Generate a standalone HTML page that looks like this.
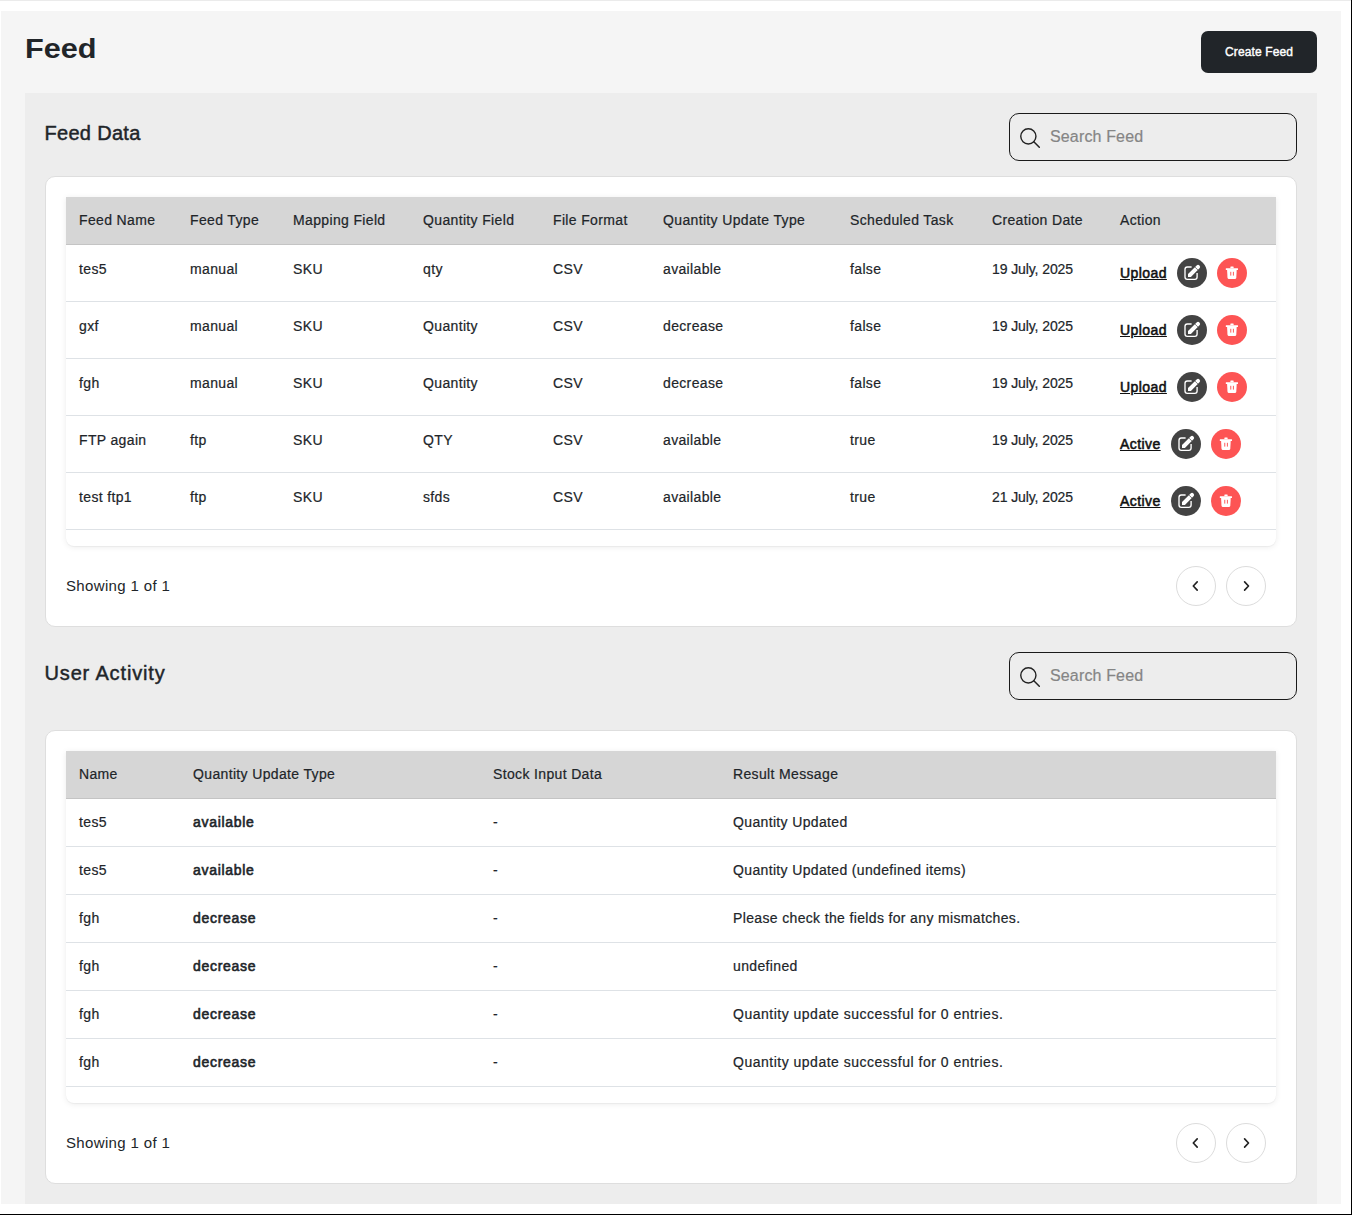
<!DOCTYPE html>
<html><head><meta charset="utf-8"><title>Feed</title>
<style>
html,body{margin:0;padding:0;}
body{width:1352px;height:1215px;position:relative;overflow:hidden;background:#fff;font-family:"Liberation Sans", sans-serif;}
.t{position:absolute;white-space:nowrap;}
.r{-webkit-text-stroke:0.2px #212529;}
</style></head><body>
<div style="position:absolute;left:0;top:0;width:1351px;height:1px;background:#ebebeb"></div>
<div style="position:absolute;left:1351px;top:0;width:1px;height:1215px;background:#000"></div>
<div style="position:absolute;left:0;top:1214px;width:1352px;height:1px;background:#000"></div>
<div style="position:absolute;left:1px;top:11px;width:1340px;height:1193px;background:#f5f5f5"></div>
<div style="position:absolute;left:25px;top:93px;width:1292px;height:1111px;background:#ededed"></div>
<div class="t" style="left:25px;top:34.70px;font-size:28px;line-height:28px;font-weight:700;color:#212529;letter-spacing:0px;transform:scaleX(1.095);transform-origin:0 0">Feed</div>
<div style="position:absolute;left:1201px;top:31px;width:116px;height:42px;background:#212529;border-radius:7px"></div>
<div class="t" style="left:1225px;top:46.44px;font-size:12px;line-height:12px;font-weight:400;color:#fff;letter-spacing:0.12px;-webkit-text-stroke:0.4px #fff">Create Feed</div>
<div class="t" style="left:44.5px;top:123.07px;font-size:20px;line-height:20px;font-weight:400;color:#212529;letter-spacing:0.3px;-webkit-text-stroke:0.45px #212529">Feed Data</div>
<div style="position:absolute;left:1009px;top:113px;width:286px;height:46px;border:1px solid #1a1a1a;border-radius:10px"><svg width="22" height="22" viewBox="0 0 22 22" style="position:absolute;left:10px;top:14px;overflow:visible"><circle cx="8.35" cy="8.35" r="7.6" fill="none" stroke="#222" stroke-width="1.4"/><line x1="13.8" y1="13.8" x2="19.3" y2="19.2" stroke="#222" stroke-width="1.5" stroke-linecap="round"/></svg></div><div class="t" style="left:1050px;top:128.86px;font-size:16px;line-height:16px;font-weight:400;color:#858585;letter-spacing:0.15px;-webkit-text-stroke:0.2px #858585">Search Feed</div>
<div style="position:absolute;left:45px;top:176px;width:1250px;height:449px;background:#fff;border:1px solid #dedede;border-radius:10px"></div>
<div style="position:absolute;left:66px;top:197px;width:1210px;height:349px;background:#fff;border-radius:0 0 8px 8px;box-shadow:0 1px 1px rgba(0,0,0,0.04),0 1px 6px rgba(0,0,0,0.08)"></div>
<div style="position:absolute;left:66px;top:197px;width:1210px;height:47px;background:#d6d6d6;border-bottom:1px solid #c4c4c4"></div>
<div class="t r" style="left:79px;top:213.15px;font-size:14px;line-height:14px;font-weight:400;color:#212529;letter-spacing:0.35px;">Feed Name</div>
<div class="t r" style="left:190px;top:213.15px;font-size:14px;line-height:14px;font-weight:400;color:#212529;letter-spacing:0.35px;">Feed Type</div>
<div class="t r" style="left:293px;top:213.15px;font-size:14px;line-height:14px;font-weight:400;color:#212529;letter-spacing:0.35px;">Mapping Field</div>
<div class="t r" style="left:423px;top:213.15px;font-size:14px;line-height:14px;font-weight:400;color:#212529;letter-spacing:0.35px;">Quantity Field</div>
<div class="t r" style="left:553px;top:213.15px;font-size:14px;line-height:14px;font-weight:400;color:#212529;letter-spacing:0.35px;">File Format</div>
<div class="t r" style="left:663px;top:213.15px;font-size:14px;line-height:14px;font-weight:400;color:#212529;letter-spacing:0.35px;">Quantity Update Type</div>
<div class="t r" style="left:850px;top:213.15px;font-size:14px;line-height:14px;font-weight:400;color:#212529;letter-spacing:0.35px;">Scheduled Task</div>
<div class="t r" style="left:992px;top:213.15px;font-size:14px;line-height:14px;font-weight:400;color:#212529;letter-spacing:0.35px;">Creation Date</div>
<div class="t r" style="left:1120px;top:213.15px;font-size:14px;line-height:14px;font-weight:400;color:#212529;letter-spacing:0.35px;">Action</div>
<div class="t r" style="left:79px;top:261.65px;font-size:14px;line-height:14px;font-weight:400;color:#212529;letter-spacing:0.35px;">tes5</div>
<div class="t r" style="left:190px;top:261.65px;font-size:14px;line-height:14px;font-weight:400;color:#212529;letter-spacing:0.35px;">manual</div>
<div class="t r" style="left:293px;top:261.65px;font-size:14px;line-height:14px;font-weight:400;color:#212529;letter-spacing:0.35px;">SKU</div>
<div class="t r" style="left:423px;top:261.65px;font-size:14px;line-height:14px;font-weight:400;color:#212529;letter-spacing:0.35px;">qty</div>
<div class="t r" style="left:553px;top:261.65px;font-size:14px;line-height:14px;font-weight:400;color:#212529;letter-spacing:0.35px;">CSV</div>
<div class="t r" style="left:663px;top:261.65px;font-size:14px;line-height:14px;font-weight:400;color:#212529;letter-spacing:0.35px;">available</div>
<div class="t r" style="left:850px;top:261.65px;font-size:14px;line-height:14px;font-weight:400;color:#212529;letter-spacing:0.35px;">false</div>
<div class="t r" style="left:992px;top:261.65px;font-size:14px;line-height:14px;font-weight:400;color:#212529;letter-spacing:-0.1px;">19 July, 2025</div>
<div class="t" style="left:1120px;top:266.25px;font-size:14px;line-height:14px;font-weight:400;color:#111;letter-spacing:0.42px;text-decoration:underline;text-underline-offset:0.7px;-webkit-text-stroke:0.55px #111">Upload</div>
<div style="position:absolute;left:1177px;top:258px;width:30px;height:30px"><svg width="30" height="30" viewBox="0 0 30 30"><circle cx="15" cy="15" r="15" fill="#434343"/><path d="M14.6 9 H10.3 Q8 9 8 11.3 V19.1 Q8 21.4 10.3 21.4 H17.8 Q20.1 21.4 20.1 19.1 V15" fill="none" stroke="#fff" stroke-width="1.35"/><path d="M11 18.9 L11 16.1 L19.6 7.5 A1.98 1.98 0 0 1 22.5 10.3 L13.9 18.9 Z" fill="#fff"/><line x1="18.0" y1="9.1" x2="20.9" y2="12.0" stroke="#434343" stroke-width="0.7"/></svg></div><div style="position:absolute;left:1217px;top:258px;width:30px;height:30px"><svg width="30" height="30" viewBox="0 0 30 30"><circle cx="15" cy="15" r="15" fill="#fd5454"/><path d="M13.2 10.3 L13.6 8.5 H16.4 L16.8 10.3 Z" fill="#fff"/><rect x="8.8" y="10.2" width="12.2" height="1.9" rx="0.4" fill="#fff"/><path d="M10.1 12 H19.7 L19.3 19.8 Q19.2 20.9 18.2 20.9 H11.6 Q10.6 20.9 10.5 19.8 Z" fill="#fff"/><rect x="13.3" y="13.8" width="0.95" height="3.8" fill="#fd5454"/><rect x="15.9" y="13.8" width="0.95" height="3.8" fill="#fd5454"/></svg></div>
<div style="position:absolute;left:66px;top:301px;width:1210px;height:1px;background:#dee2e6"></div>
<div class="t r" style="left:79px;top:318.65px;font-size:14px;line-height:14px;font-weight:400;color:#212529;letter-spacing:0.35px;">gxf</div>
<div class="t r" style="left:190px;top:318.65px;font-size:14px;line-height:14px;font-weight:400;color:#212529;letter-spacing:0.35px;">manual</div>
<div class="t r" style="left:293px;top:318.65px;font-size:14px;line-height:14px;font-weight:400;color:#212529;letter-spacing:0.35px;">SKU</div>
<div class="t r" style="left:423px;top:318.65px;font-size:14px;line-height:14px;font-weight:400;color:#212529;letter-spacing:0.35px;">Quantity</div>
<div class="t r" style="left:553px;top:318.65px;font-size:14px;line-height:14px;font-weight:400;color:#212529;letter-spacing:0.35px;">CSV</div>
<div class="t r" style="left:663px;top:318.65px;font-size:14px;line-height:14px;font-weight:400;color:#212529;letter-spacing:0.35px;">decrease</div>
<div class="t r" style="left:850px;top:318.65px;font-size:14px;line-height:14px;font-weight:400;color:#212529;letter-spacing:0.35px;">false</div>
<div class="t r" style="left:992px;top:318.65px;font-size:14px;line-height:14px;font-weight:400;color:#212529;letter-spacing:-0.1px;">19 July, 2025</div>
<div class="t" style="left:1120px;top:323.25px;font-size:14px;line-height:14px;font-weight:400;color:#111;letter-spacing:0.42px;text-decoration:underline;text-underline-offset:0.7px;-webkit-text-stroke:0.55px #111">Upload</div>
<div style="position:absolute;left:1177px;top:315px;width:30px;height:30px"><svg width="30" height="30" viewBox="0 0 30 30"><circle cx="15" cy="15" r="15" fill="#434343"/><path d="M14.6 9 H10.3 Q8 9 8 11.3 V19.1 Q8 21.4 10.3 21.4 H17.8 Q20.1 21.4 20.1 19.1 V15" fill="none" stroke="#fff" stroke-width="1.35"/><path d="M11 18.9 L11 16.1 L19.6 7.5 A1.98 1.98 0 0 1 22.5 10.3 L13.9 18.9 Z" fill="#fff"/><line x1="18.0" y1="9.1" x2="20.9" y2="12.0" stroke="#434343" stroke-width="0.7"/></svg></div><div style="position:absolute;left:1217px;top:315px;width:30px;height:30px"><svg width="30" height="30" viewBox="0 0 30 30"><circle cx="15" cy="15" r="15" fill="#fd5454"/><path d="M13.2 10.3 L13.6 8.5 H16.4 L16.8 10.3 Z" fill="#fff"/><rect x="8.8" y="10.2" width="12.2" height="1.9" rx="0.4" fill="#fff"/><path d="M10.1 12 H19.7 L19.3 19.8 Q19.2 20.9 18.2 20.9 H11.6 Q10.6 20.9 10.5 19.8 Z" fill="#fff"/><rect x="13.3" y="13.8" width="0.95" height="3.8" fill="#fd5454"/><rect x="15.9" y="13.8" width="0.95" height="3.8" fill="#fd5454"/></svg></div>
<div style="position:absolute;left:66px;top:358px;width:1210px;height:1px;background:#dee2e6"></div>
<div class="t r" style="left:79px;top:375.65px;font-size:14px;line-height:14px;font-weight:400;color:#212529;letter-spacing:0.35px;">fgh</div>
<div class="t r" style="left:190px;top:375.65px;font-size:14px;line-height:14px;font-weight:400;color:#212529;letter-spacing:0.35px;">manual</div>
<div class="t r" style="left:293px;top:375.65px;font-size:14px;line-height:14px;font-weight:400;color:#212529;letter-spacing:0.35px;">SKU</div>
<div class="t r" style="left:423px;top:375.65px;font-size:14px;line-height:14px;font-weight:400;color:#212529;letter-spacing:0.35px;">Quantity</div>
<div class="t r" style="left:553px;top:375.65px;font-size:14px;line-height:14px;font-weight:400;color:#212529;letter-spacing:0.35px;">CSV</div>
<div class="t r" style="left:663px;top:375.65px;font-size:14px;line-height:14px;font-weight:400;color:#212529;letter-spacing:0.35px;">decrease</div>
<div class="t r" style="left:850px;top:375.65px;font-size:14px;line-height:14px;font-weight:400;color:#212529;letter-spacing:0.35px;">false</div>
<div class="t r" style="left:992px;top:375.65px;font-size:14px;line-height:14px;font-weight:400;color:#212529;letter-spacing:-0.1px;">19 July, 2025</div>
<div class="t" style="left:1120px;top:380.25px;font-size:14px;line-height:14px;font-weight:400;color:#111;letter-spacing:0.42px;text-decoration:underline;text-underline-offset:0.7px;-webkit-text-stroke:0.55px #111">Upload</div>
<div style="position:absolute;left:1177px;top:372px;width:30px;height:30px"><svg width="30" height="30" viewBox="0 0 30 30"><circle cx="15" cy="15" r="15" fill="#434343"/><path d="M14.6 9 H10.3 Q8 9 8 11.3 V19.1 Q8 21.4 10.3 21.4 H17.8 Q20.1 21.4 20.1 19.1 V15" fill="none" stroke="#fff" stroke-width="1.35"/><path d="M11 18.9 L11 16.1 L19.6 7.5 A1.98 1.98 0 0 1 22.5 10.3 L13.9 18.9 Z" fill="#fff"/><line x1="18.0" y1="9.1" x2="20.9" y2="12.0" stroke="#434343" stroke-width="0.7"/></svg></div><div style="position:absolute;left:1217px;top:372px;width:30px;height:30px"><svg width="30" height="30" viewBox="0 0 30 30"><circle cx="15" cy="15" r="15" fill="#fd5454"/><path d="M13.2 10.3 L13.6 8.5 H16.4 L16.8 10.3 Z" fill="#fff"/><rect x="8.8" y="10.2" width="12.2" height="1.9" rx="0.4" fill="#fff"/><path d="M10.1 12 H19.7 L19.3 19.8 Q19.2 20.9 18.2 20.9 H11.6 Q10.6 20.9 10.5 19.8 Z" fill="#fff"/><rect x="13.3" y="13.8" width="0.95" height="3.8" fill="#fd5454"/><rect x="15.9" y="13.8" width="0.95" height="3.8" fill="#fd5454"/></svg></div>
<div style="position:absolute;left:66px;top:415px;width:1210px;height:1px;background:#dee2e6"></div>
<div class="t r" style="left:79px;top:432.65px;font-size:14px;line-height:14px;font-weight:400;color:#212529;letter-spacing:0.35px;">FTP again</div>
<div class="t r" style="left:190px;top:432.65px;font-size:14px;line-height:14px;font-weight:400;color:#212529;letter-spacing:0.35px;">ftp</div>
<div class="t r" style="left:293px;top:432.65px;font-size:14px;line-height:14px;font-weight:400;color:#212529;letter-spacing:0.35px;">SKU</div>
<div class="t r" style="left:423px;top:432.65px;font-size:14px;line-height:14px;font-weight:400;color:#212529;letter-spacing:0.35px;">QTY</div>
<div class="t r" style="left:553px;top:432.65px;font-size:14px;line-height:14px;font-weight:400;color:#212529;letter-spacing:0.35px;">CSV</div>
<div class="t r" style="left:663px;top:432.65px;font-size:14px;line-height:14px;font-weight:400;color:#212529;letter-spacing:0.35px;">available</div>
<div class="t r" style="left:850px;top:432.65px;font-size:14px;line-height:14px;font-weight:400;color:#212529;letter-spacing:0.35px;">true</div>
<div class="t r" style="left:992px;top:432.65px;font-size:14px;line-height:14px;font-weight:400;color:#212529;letter-spacing:-0.1px;">19 July, 2025</div>
<div class="t" style="left:1120px;top:437.25px;font-size:14px;line-height:14px;font-weight:400;color:#111;letter-spacing:0.42px;text-decoration:underline;text-underline-offset:0.7px;-webkit-text-stroke:0.55px #111">Active</div>
<div style="position:absolute;left:1171px;top:429px;width:30px;height:30px"><svg width="30" height="30" viewBox="0 0 30 30"><circle cx="15" cy="15" r="15" fill="#434343"/><path d="M14.6 9 H10.3 Q8 9 8 11.3 V19.1 Q8 21.4 10.3 21.4 H17.8 Q20.1 21.4 20.1 19.1 V15" fill="none" stroke="#fff" stroke-width="1.35"/><path d="M11 18.9 L11 16.1 L19.6 7.5 A1.98 1.98 0 0 1 22.5 10.3 L13.9 18.9 Z" fill="#fff"/><line x1="18.0" y1="9.1" x2="20.9" y2="12.0" stroke="#434343" stroke-width="0.7"/></svg></div><div style="position:absolute;left:1211px;top:429px;width:30px;height:30px"><svg width="30" height="30" viewBox="0 0 30 30"><circle cx="15" cy="15" r="15" fill="#fd5454"/><path d="M13.2 10.3 L13.6 8.5 H16.4 L16.8 10.3 Z" fill="#fff"/><rect x="8.8" y="10.2" width="12.2" height="1.9" rx="0.4" fill="#fff"/><path d="M10.1 12 H19.7 L19.3 19.8 Q19.2 20.9 18.2 20.9 H11.6 Q10.6 20.9 10.5 19.8 Z" fill="#fff"/><rect x="13.3" y="13.8" width="0.95" height="3.8" fill="#fd5454"/><rect x="15.9" y="13.8" width="0.95" height="3.8" fill="#fd5454"/></svg></div>
<div style="position:absolute;left:66px;top:472px;width:1210px;height:1px;background:#dee2e6"></div>
<div class="t r" style="left:79px;top:489.65px;font-size:14px;line-height:14px;font-weight:400;color:#212529;letter-spacing:0.35px;">test ftp1</div>
<div class="t r" style="left:190px;top:489.65px;font-size:14px;line-height:14px;font-weight:400;color:#212529;letter-spacing:0.35px;">ftp</div>
<div class="t r" style="left:293px;top:489.65px;font-size:14px;line-height:14px;font-weight:400;color:#212529;letter-spacing:0.35px;">SKU</div>
<div class="t r" style="left:423px;top:489.65px;font-size:14px;line-height:14px;font-weight:400;color:#212529;letter-spacing:0.35px;">sfds</div>
<div class="t r" style="left:553px;top:489.65px;font-size:14px;line-height:14px;font-weight:400;color:#212529;letter-spacing:0.35px;">CSV</div>
<div class="t r" style="left:663px;top:489.65px;font-size:14px;line-height:14px;font-weight:400;color:#212529;letter-spacing:0.35px;">available</div>
<div class="t r" style="left:850px;top:489.65px;font-size:14px;line-height:14px;font-weight:400;color:#212529;letter-spacing:0.35px;">true</div>
<div class="t r" style="left:992px;top:489.65px;font-size:14px;line-height:14px;font-weight:400;color:#212529;letter-spacing:-0.1px;">21 July, 2025</div>
<div class="t" style="left:1120px;top:494.25px;font-size:14px;line-height:14px;font-weight:400;color:#111;letter-spacing:0.42px;text-decoration:underline;text-underline-offset:0.7px;-webkit-text-stroke:0.55px #111">Active</div>
<div style="position:absolute;left:1171px;top:486px;width:30px;height:30px"><svg width="30" height="30" viewBox="0 0 30 30"><circle cx="15" cy="15" r="15" fill="#434343"/><path d="M14.6 9 H10.3 Q8 9 8 11.3 V19.1 Q8 21.4 10.3 21.4 H17.8 Q20.1 21.4 20.1 19.1 V15" fill="none" stroke="#fff" stroke-width="1.35"/><path d="M11 18.9 L11 16.1 L19.6 7.5 A1.98 1.98 0 0 1 22.5 10.3 L13.9 18.9 Z" fill="#fff"/><line x1="18.0" y1="9.1" x2="20.9" y2="12.0" stroke="#434343" stroke-width="0.7"/></svg></div><div style="position:absolute;left:1211px;top:486px;width:30px;height:30px"><svg width="30" height="30" viewBox="0 0 30 30"><circle cx="15" cy="15" r="15" fill="#fd5454"/><path d="M13.2 10.3 L13.6 8.5 H16.4 L16.8 10.3 Z" fill="#fff"/><rect x="8.8" y="10.2" width="12.2" height="1.9" rx="0.4" fill="#fff"/><path d="M10.1 12 H19.7 L19.3 19.8 Q19.2 20.9 18.2 20.9 H11.6 Q10.6 20.9 10.5 19.8 Z" fill="#fff"/><rect x="13.3" y="13.8" width="0.95" height="3.8" fill="#fd5454"/><rect x="15.9" y="13.8" width="0.95" height="3.8" fill="#fd5454"/></svg></div>
<div style="position:absolute;left:66px;top:529px;width:1210px;height:1px;background:#dee2e6"></div>
<div class="t" style="left:66px;top:578.30px;font-size:15px;line-height:15px;font-weight:400;color:#212529;letter-spacing:0.35px;">Showing 1 of 1</div>
<div style="position:absolute;left:1176px;top:566px;width:40px;height:40px;box-sizing:border-box;border:1px solid #dcdcdc;border-radius:50%;overflow:hidden"><div style="position:absolute;left:-1px;top:-1px"><svg width="40" height="40" viewBox="0 0 40 40"><polyline points="21.2,15.9 17.3,20 21.2,24.1" fill="none" stroke="#222" stroke-width="1.65" stroke-linecap="round" stroke-linejoin="round"/></svg></div></div><div style="position:absolute;left:1226px;top:566px;width:40px;height:40px;box-sizing:border-box;border:1px solid #dcdcdc;border-radius:50%;overflow:hidden"><div style="position:absolute;left:-1px;top:-1px"><svg width="40" height="40" viewBox="0 0 40 40"><polyline points="18.6,15.9 22.5,20 18.6,24.1" fill="none" stroke="#222" stroke-width="1.65" stroke-linecap="round" stroke-linejoin="round"/></svg></div></div>
<div class="t" style="left:44.5px;top:662.77px;font-size:20px;line-height:20px;font-weight:400;color:#212529;letter-spacing:0.85px;-webkit-text-stroke:0.45px #212529">User Activity</div>
<div style="position:absolute;left:1009px;top:652px;width:286px;height:46px;border:1px solid #1a1a1a;border-radius:10px"><svg width="22" height="22" viewBox="0 0 22 22" style="position:absolute;left:10px;top:14px;overflow:visible"><circle cx="8.35" cy="8.35" r="7.6" fill="none" stroke="#222" stroke-width="1.4"/><line x1="13.8" y1="13.8" x2="19.3" y2="19.2" stroke="#222" stroke-width="1.5" stroke-linecap="round"/></svg></div><div class="t" style="left:1050px;top:667.86px;font-size:16px;line-height:16px;font-weight:400;color:#858585;letter-spacing:0.15px;-webkit-text-stroke:0.2px #858585">Search Feed</div>
<div style="position:absolute;left:45px;top:730px;width:1250px;height:452px;background:#fff;border:1px solid #dedede;border-radius:10px"></div>
<div style="position:absolute;left:66px;top:751px;width:1210px;height:352px;background:#fff;border-radius:0 0 8px 8px;box-shadow:0 1px 1px rgba(0,0,0,0.04),0 1px 6px rgba(0,0,0,0.08)"></div>
<div style="position:absolute;left:66px;top:751px;width:1210px;height:47px;background:#d6d6d6;border-bottom:1px solid #c4c4c4"></div>
<div class="t r" style="left:79px;top:767.15px;font-size:14px;line-height:14px;font-weight:400;color:#212529;letter-spacing:0.35px;">Name</div>
<div class="t r" style="left:193px;top:767.15px;font-size:14px;line-height:14px;font-weight:400;color:#212529;letter-spacing:0.35px;">Quantity Update Type</div>
<div class="t r" style="left:493px;top:767.15px;font-size:14px;line-height:14px;font-weight:400;color:#212529;letter-spacing:0.35px;">Stock Input Data</div>
<div class="t r" style="left:733px;top:767.15px;font-size:14px;line-height:14px;font-weight:400;color:#212529;letter-spacing:0.35px;">Result Message</div>
<div class="t r" style="left:79px;top:815.15px;font-size:14px;line-height:14px;font-weight:400;color:#212529;letter-spacing:0.35px;">tes5</div>
<div class="t r" style="left:193px;top:815.15px;font-size:14px;line-height:14px;font-weight:400;color:#212529;letter-spacing:0.7px;-webkit-text-stroke:0.6px #212529">available</div>
<div class="t r" style="left:493px;top:815.15px;font-size:14px;line-height:14px;font-weight:400;color:#212529;letter-spacing:0.35px;">-</div>
<div class="t r" style="left:733px;top:815.15px;font-size:14px;line-height:14px;font-weight:400;color:#212529;letter-spacing:0.35px;">Quantity Updated</div>
<div style="position:absolute;left:66px;top:846px;width:1210px;height:1px;background:#dee2e6"></div>
<div class="t r" style="left:79px;top:863.15px;font-size:14px;line-height:14px;font-weight:400;color:#212529;letter-spacing:0.35px;">tes5</div>
<div class="t r" style="left:193px;top:863.15px;font-size:14px;line-height:14px;font-weight:400;color:#212529;letter-spacing:0.7px;-webkit-text-stroke:0.6px #212529">available</div>
<div class="t r" style="left:493px;top:863.15px;font-size:14px;line-height:14px;font-weight:400;color:#212529;letter-spacing:0.35px;">-</div>
<div class="t r" style="left:733px;top:863.15px;font-size:14px;line-height:14px;font-weight:400;color:#212529;letter-spacing:0.35px;">Quantity Updated (undefined items)</div>
<div style="position:absolute;left:66px;top:894px;width:1210px;height:1px;background:#dee2e6"></div>
<div class="t r" style="left:79px;top:911.15px;font-size:14px;line-height:14px;font-weight:400;color:#212529;letter-spacing:0.35px;">fgh</div>
<div class="t r" style="left:193px;top:911.15px;font-size:14px;line-height:14px;font-weight:400;color:#212529;letter-spacing:0.7px;-webkit-text-stroke:0.6px #212529">decrease</div>
<div class="t r" style="left:493px;top:911.15px;font-size:14px;line-height:14px;font-weight:400;color:#212529;letter-spacing:0.35px;">-</div>
<div class="t r" style="left:733px;top:911.15px;font-size:14px;line-height:14px;font-weight:400;color:#212529;letter-spacing:0.35px;">Please check the fields for any mismatches.</div>
<div style="position:absolute;left:66px;top:942px;width:1210px;height:1px;background:#dee2e6"></div>
<div class="t r" style="left:79px;top:959.15px;font-size:14px;line-height:14px;font-weight:400;color:#212529;letter-spacing:0.35px;">fgh</div>
<div class="t r" style="left:193px;top:959.15px;font-size:14px;line-height:14px;font-weight:400;color:#212529;letter-spacing:0.7px;-webkit-text-stroke:0.6px #212529">decrease</div>
<div class="t r" style="left:493px;top:959.15px;font-size:14px;line-height:14px;font-weight:400;color:#212529;letter-spacing:0.35px;">-</div>
<div class="t r" style="left:733px;top:959.15px;font-size:14px;line-height:14px;font-weight:400;color:#212529;letter-spacing:0.35px;">undefined</div>
<div style="position:absolute;left:66px;top:990px;width:1210px;height:1px;background:#dee2e6"></div>
<div class="t r" style="left:79px;top:1007.15px;font-size:14px;line-height:14px;font-weight:400;color:#212529;letter-spacing:0.35px;">fgh</div>
<div class="t r" style="left:193px;top:1007.15px;font-size:14px;line-height:14px;font-weight:400;color:#212529;letter-spacing:0.7px;-webkit-text-stroke:0.6px #212529">decrease</div>
<div class="t r" style="left:493px;top:1007.15px;font-size:14px;line-height:14px;font-weight:400;color:#212529;letter-spacing:0.35px;">-</div>
<div class="t r" style="left:733px;top:1007.15px;font-size:14px;line-height:14px;font-weight:400;color:#212529;letter-spacing:0.5px;">Quantity update successful for 0 entries.</div>
<div style="position:absolute;left:66px;top:1038px;width:1210px;height:1px;background:#dee2e6"></div>
<div class="t r" style="left:79px;top:1055.15px;font-size:14px;line-height:14px;font-weight:400;color:#212529;letter-spacing:0.35px;">fgh</div>
<div class="t r" style="left:193px;top:1055.15px;font-size:14px;line-height:14px;font-weight:400;color:#212529;letter-spacing:0.7px;-webkit-text-stroke:0.6px #212529">decrease</div>
<div class="t r" style="left:493px;top:1055.15px;font-size:14px;line-height:14px;font-weight:400;color:#212529;letter-spacing:0.35px;">-</div>
<div class="t r" style="left:733px;top:1055.15px;font-size:14px;line-height:14px;font-weight:400;color:#212529;letter-spacing:0.5px;">Quantity update successful for 0 entries.</div>
<div style="position:absolute;left:66px;top:1086px;width:1210px;height:1px;background:#dee2e6"></div>
<div class="t" style="left:66px;top:1135.30px;font-size:15px;line-height:15px;font-weight:400;color:#212529;letter-spacing:0.35px;">Showing 1 of 1</div>
<div style="position:absolute;left:1176px;top:1123px;width:40px;height:40px;box-sizing:border-box;border:1px solid #dcdcdc;border-radius:50%;overflow:hidden"><div style="position:absolute;left:-1px;top:-1px"><svg width="40" height="40" viewBox="0 0 40 40"><polyline points="21.2,15.9 17.3,20 21.2,24.1" fill="none" stroke="#222" stroke-width="1.65" stroke-linecap="round" stroke-linejoin="round"/></svg></div></div><div style="position:absolute;left:1226px;top:1123px;width:40px;height:40px;box-sizing:border-box;border:1px solid #dcdcdc;border-radius:50%;overflow:hidden"><div style="position:absolute;left:-1px;top:-1px"><svg width="40" height="40" viewBox="0 0 40 40"><polyline points="18.6,15.9 22.5,20 18.6,24.1" fill="none" stroke="#222" stroke-width="1.65" stroke-linecap="round" stroke-linejoin="round"/></svg></div></div>
</body></html>
